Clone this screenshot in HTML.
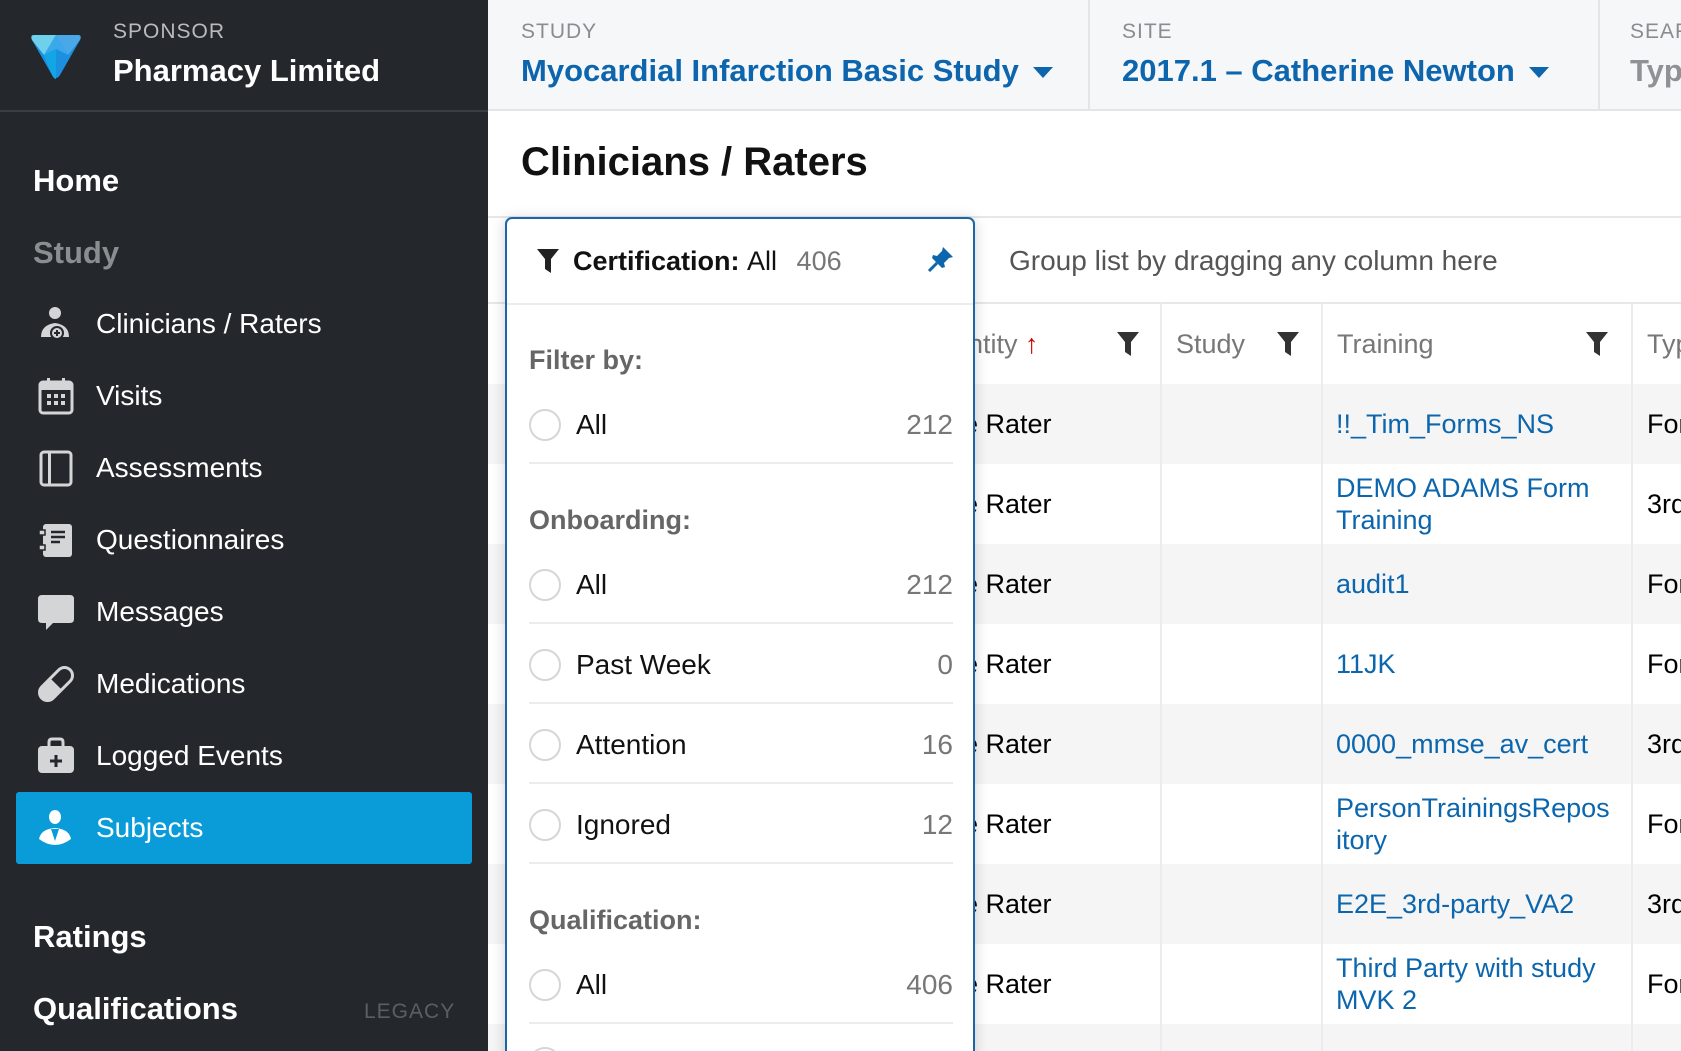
<!DOCTYPE html>
<html style="overflow:hidden;width:1681px;height:1051px"><head><meta charset="utf-8">
<style>
*{margin:0;padding:0;box-sizing:border-box}
body{width:1681px;height:1051px;overflow:hidden;background:#fff;font-family:"Liberation Sans",sans-serif;position:relative}
.a{position:absolute;white-space:nowrap}
#sb{position:absolute;left:0;top:0;width:488px;height:1051px;background:#24272b}
.nav{position:absolute;left:96px;color:#fff;font-size:28px;line-height:34px}
.ic{position:absolute;left:37px;width:38px;height:38px}
.sec{position:absolute;left:33px;font-size:31px;font-weight:bold;color:#fff;line-height:38px}
.hd{position:absolute;top:0;height:111px;background:#f6f7f8;border-bottom:2px solid #e4e5e7}
.lbl{font-size:21px;color:#8a8c8f;letter-spacing:1px}
.big{font-size:31px;font-weight:bold;color:#0c65ad}
.tri{display:inline-block;width:0;height:0;border-left:10px solid transparent;border-right:10px solid transparent;border-top:11px solid #0c65ad;margin-left:14px;vertical-align:middle}
.row{position:absolute;left:488px;width:1193px;height:80px}
.cell{position:absolute;font-size:27px;line-height:32px}
.lnk{color:#0b66ad}
.vl{position:absolute;top:303px;width:2px;height:748px;background:#ececee}
.fun{position:absolute;width:22px;height:24px}
#pop{position:absolute;left:505px;top:217px;width:470px;height:850px;background:#fff;border:2px solid #1a66a6;border-radius:7px;box-shadow:0 2px 14px rgba(0,0,0,.18)}
#clip{position:absolute;left:0;top:0;width:1681px;height:1051px;overflow:hidden}
.pl{position:absolute;left:22px;font-size:27px;font-weight:bold;color:#666}
.rad{position:absolute;left:22px;width:32px;height:32px;border:2px solid #d4d6d8;border-radius:50%}
.pt{position:absolute;left:69px;font-size:28px;color:#111}
.pc{position:absolute;right:20px;font-size:28px;color:#777}
.pline{position:absolute;left:22px;right:20px;height:2px;background:#ececee}
</style></head><body>
<div id="clip">
<div id="sb">
<svg class="a" style="left:30px;top:33px" width="52" height="46" viewBox="0 0 52 46">
<path d="M4 2 H48 Q52 2 50 7 L30 42 Q26 48 22 42 L2 7 Q0 2 4 2Z" fill="#1b8fe0"/>
<path d="M4 2 H26 L14 22 L2 7 Q0 2 4 2Z" fill="#6fd0ec"/>
<path d="M26 2 H48 Q52 2 50 7 L38 22Z" fill="#4aa8e8"/>
<path d="M14 22 L26 2 L38 22 L26 16Z" fill="#3aa9ea"/>
<path d="M14 22 L26 16 L26 46 Q24 46 22 42Z" fill="#13a6e6"/>
</svg>
<div class="a lbl" style="left:113px;top:20px;color:#b9bbbd">SPONSOR</div>
<div class="a" style="left:113px;top:53px;font-size:31px;font-weight:bold;color:#fff">Pharmacy Limited</div>
<div class="a" style="left:0;top:110px;width:488px;height:2px;background:#3a3d41"></div>
<div class="sec" style="top:162px">Home</div>
<div class="sec" style="top:234px;color:#8b8e91">Study</div>

<svg class="ic" style="top:305px" viewBox="0 0 38 38"><circle cx="18" cy="8" r="6" fill="#d4d5d7"/><path d="M4 32 Q4 20 18 18 Q32 20 32 32 Z" fill="#d4d5d7"/><circle cx="20" cy="28" r="6" fill="#d4d5d7" stroke="#24272b" stroke-width="2"/><path d="M20 25v6M17 28h6" stroke="#24272b" stroke-width="2"/></svg>
<div class="nav" style="top:307px">Clinicians / Raters</div>
<svg class="ic" style="top:377px" viewBox="0 0 38 38"><rect x="3" y="5" width="32" height="31" rx="3" fill="none" stroke="#d4d5d7" stroke-width="3"/><rect x="3" y="5" width="32" height="8" fill="#d4d5d7"/><rect x="10" y="1" width="3" height="6" fill="#d4d5d7"/><rect x="25" y="1" width="3" height="6" fill="#d4d5d7"/><g fill="#d4d5d7"><rect x="10" y="17" width="4" height="4"/><rect x="17" y="17" width="4" height="4"/><rect x="24" y="17" width="4" height="4"/><rect x="10" y="24" width="4" height="4"/><rect x="17" y="24" width="4" height="4"/><rect x="24" y="24" width="4" height="4"/></g></svg>
<div class="nav" style="top:379px">Visits</div>
<svg class="ic" style="top:449px" viewBox="0 0 38 38"><rect x="4" y="3" width="30" height="33" rx="3" fill="none" stroke="#d4d5d7" stroke-width="3"/><rect x="11" y="3" width="3" height="33" fill="#d4d5d7"/></svg>
<div class="nav" style="top:451px">Assessments</div>
<svg class="ic" style="top:521px" viewBox="0 0 38 38"><rect x="6" y="3" width="29" height="33" rx="3" fill="#d4d5d7"/><rect x="2" y="9" width="6" height="5" fill="#d4d5d7" stroke="#24272b" stroke-width="1.5"/><rect x="2" y="24" width="6" height="5" fill="#d4d5d7" stroke="#24272b" stroke-width="1.5"/><path d="M14 11h14M14 16h14M14 21h9" stroke="#24272b" stroke-width="2.5"/></svg>
<div class="nav" style="top:523px">Questionnaires</div>
<svg class="ic" style="top:593px" viewBox="0 0 38 38"><path d="M5 2H33Q37 2 37 6V26Q37 30 33 30H16L9 37V30H5Q1 30 1 26V6Q1 2 5 2Z" fill="#d4d5d7"/></svg>
<div class="nav" style="top:595px">Messages</div>
<svg class="ic" style="top:665px" viewBox="0 0 38 38"><g transform="rotate(-45 19 19)"><rect x="-1" y="11" width="40" height="16" rx="8" fill="none" stroke="#d4d5d7" stroke-width="3"/><path d="M8 11H19V27H8A8 8 0 0 1 8 11Z" fill="#d4d5d7"/></g></svg>
<div class="nav" style="top:667px">Medications</div>
<svg class="ic" style="top:737px" viewBox="0 0 38 38"><path d="M12 9V5Q12 2 15 2H23Q26 2 26 5V9" fill="none" stroke="#d4d5d7" stroke-width="3"/><rect x="1" y="9" width="36" height="27" rx="4" fill="#d4d5d7"/><path d="M19 18v12M13 24h12" stroke="#24272b" stroke-width="3"/></svg>
<div class="nav" style="top:739px">Logged Events</div>
<div class="a" style="left:16px;top:792px;width:456px;height:72px;background:#0a9bd9;border-radius:3px"></div>
<svg class="ic" style="top:809px" viewBox="0 0 38 38"><ellipse cx="18" cy="8" rx="6" ry="7" fill="#fff"/><path d="M2 30 Q4 20 18 19 Q32 20 34 30 Q26 36 18 36 Q10 36 2 30Z" fill="#fff"/><path d="M14 20L18 32L22 20Z" fill="#0a9bd9"/></svg>
<div class="nav" style="top:811px">Subjects</div>
<div class="sec" style="top:918px">Ratings</div>
<div class="sec" style="top:990px">Qualifications</div>
<div class="a lbl" style="left:364px;top:1000px;color:#5c5f62">LEGACY</div>
</div>

<div class="hd" style="left:488px;width:1193px"></div>
<div class="a" style="left:1088px;top:0;width:2px;height:111px;background:#e4e5e7"></div>
<div class="a" style="left:1598px;top:0;width:2px;height:111px;background:#e4e5e7"></div>
<div class="a lbl" style="left:521px;top:20px">STUDY</div>
<div class="a big" style="left:521px;top:53px">Myocardial Infarction Basic Study<span class="tri"></span></div>
<div class="a lbl" style="left:1122px;top:20px">SITE</div>
<div class="a big" style="left:1122px;top:53px">2017.1 – Catherine Newton<span class="tri"></span></div>
<div class="a lbl" style="left:1630px;top:20px">SEARCH</div>
<div class="a" style="left:1630px;top:53px;font-size:31px;font-weight:bold;color:#8f9194">Type</div>

<div class="a" style="left:521px;top:140px;font-size:40px;font-weight:bold;color:#111">Clinicians / Raters</div>
<div class="a" style="left:488px;top:216px;width:1193px;height:2px;background:#e6e7e9"></div>
<div class="a" style="left:1009px;top:245px;font-size:28px;color:#555">Group list by dragging any column here</div>
<div class="a" style="left:488px;top:302px;width:1193px;height:2px;background:#e6e7e9"></div>

<div class="row" style="top:384px;background:#f5f5f6"></div>
<div class="row" style="top:544px;background:#f5f5f6"></div>
<div class="row" style="top:704px;background:#f5f5f6"></div>
<div class="row" style="top:864px;background:#f5f5f6"></div>
<div class="row" style="top:1024px;background:#f5f5f6"></div>
<div class="vl" style="left:1160px"></div>
<div class="vl" style="left:1321px"></div>
<div class="vl" style="left:1631px"></div>

<div class="cell" style="left:968px;top:328px;color:#777">ntity <span style="color:#c00">↑</span></div>
<svg class="fun" style="left:1117px;top:332px" viewBox="0 0 22 24"><path d="M0 0H22L14 10V24L8 20V10Z" fill="#333"/></svg>
<div class="cell" style="left:1176px;top:328px;color:#777">Study</div>
<svg class="fun" style="left:1277px;top:332px" viewBox="0 0 22 24"><path d="M0 0H22L14 10V24L8 20V10Z" fill="#333"/></svg>
<div class="cell" style="left:1337px;top:328px;color:#777">Training</div>
<svg class="fun" style="left:1586px;top:332px" viewBox="0 0 22 24"><path d="M0 0H22L14 10V24L8 20V10Z" fill="#333"/></svg>
<div class="cell" style="left:1647px;top:328px;color:#777">Type</div>

<div class="cell" style="left:963px;top:408px">e Rater</div><div class="cell lnk" style="left:1336px;top:408px">!!_Tim_Forms_NS</div><div class="cell" style="left:1647px;top:408px">Form</div>
<div class="cell" style="left:963px;top:488px">e Rater</div><div class="cell lnk" style="left:1336px;top:472px">DEMO ADAMS Form<br>Training</div><div class="cell" style="left:1647px;top:488px">3rd</div>
<div class="cell" style="left:963px;top:568px">e Rater</div><div class="cell lnk" style="left:1336px;top:568px">audit1</div><div class="cell" style="left:1647px;top:568px">Form</div>
<div class="cell" style="left:963px;top:648px">e Rater</div><div class="cell lnk" style="left:1336px;top:648px">11JK</div><div class="cell" style="left:1647px;top:648px">Form</div>
<div class="cell" style="left:963px;top:728px">e Rater</div><div class="cell lnk" style="left:1336px;top:728px">0000_mmse_av_cert</div><div class="cell" style="left:1647px;top:728px">3rd</div>
<div class="cell" style="left:963px;top:808px">e Rater</div><div class="cell lnk" style="left:1336px;top:792px">PersonTrainingsRepos<br>itory</div><div class="cell" style="left:1647px;top:808px">Form</div>
<div class="cell" style="left:963px;top:888px">e Rater</div><div class="cell lnk" style="left:1336px;top:888px">E2E_3rd-party_VA2</div><div class="cell" style="left:1647px;top:888px">3rd</div>
<div class="cell" style="left:963px;top:968px">e Rater</div><div class="cell lnk" style="left:1336px;top:952px">Third Party with study<br>MVK 2</div><div class="cell" style="left:1647px;top:968px">Form</div>

<div id="pop">
<svg class="a" style="left:30px;top:30px" width="22" height="24" viewBox="0 0 22 24"><path d="M0 0H22L14 10V24L8 20V10Z" fill="#222"/></svg>
<div class="a" style="left:66px;top:27px;font-size:27px;font-weight:bold;color:#111">Certification: <span style="font-weight:normal">All</span> <span style="font-weight:normal;color:#777;margin-left:12px">406</span></div>
<svg class="a" style="left:420px;top:26px" width="28" height="28" viewBox="0 0 28 28"><path d="M16 2L26 12L22 13L17 18L18 22L15 23L5 13L6 10L10 11L15 6Z" fill="#0c65ad"/><path d="M10 18L2 26" stroke="#0c65ad" stroke-width="3"/></svg>
<div class="a" style="left:0;top:84px;width:466px;height:2px;background:#ececee"></div>
<div class="pl" style="top:126px">Filter by:</div>
<div class="rad" style="top:190px"></div><div class="pt" style="top:190px">All</div><div class="pc" style="top:190px">212</div>
<div class="pline" style="top:243px"></div>
<div class="pl" style="top:286px">Onboarding:</div>
<div class="rad" style="top:350px"></div><div class="pt" style="top:350px">All</div><div class="pc" style="top:350px">212</div>
<div class="pline" style="top:403px"></div>
<div class="rad" style="top:430px"></div><div class="pt" style="top:430px">Past Week</div><div class="pc" style="top:430px">0</div>
<div class="pline" style="top:483px"></div>
<div class="rad" style="top:510px"></div><div class="pt" style="top:510px">Attention</div><div class="pc" style="top:510px">16</div>
<div class="pline" style="top:563px"></div>
<div class="rad" style="top:590px"></div><div class="pt" style="top:590px">Ignored</div><div class="pc" style="top:590px">12</div>
<div class="pline" style="top:643px"></div>
<div class="pl" style="top:686px">Qualification:</div>
<div class="rad" style="top:750px"></div><div class="pt" style="top:750px">All</div><div class="pc" style="top:750px">406</div>
<div class="pline" style="top:803px"></div>
<div class="rad" style="top:828px"></div>
</div>
</div>
</body></html>
